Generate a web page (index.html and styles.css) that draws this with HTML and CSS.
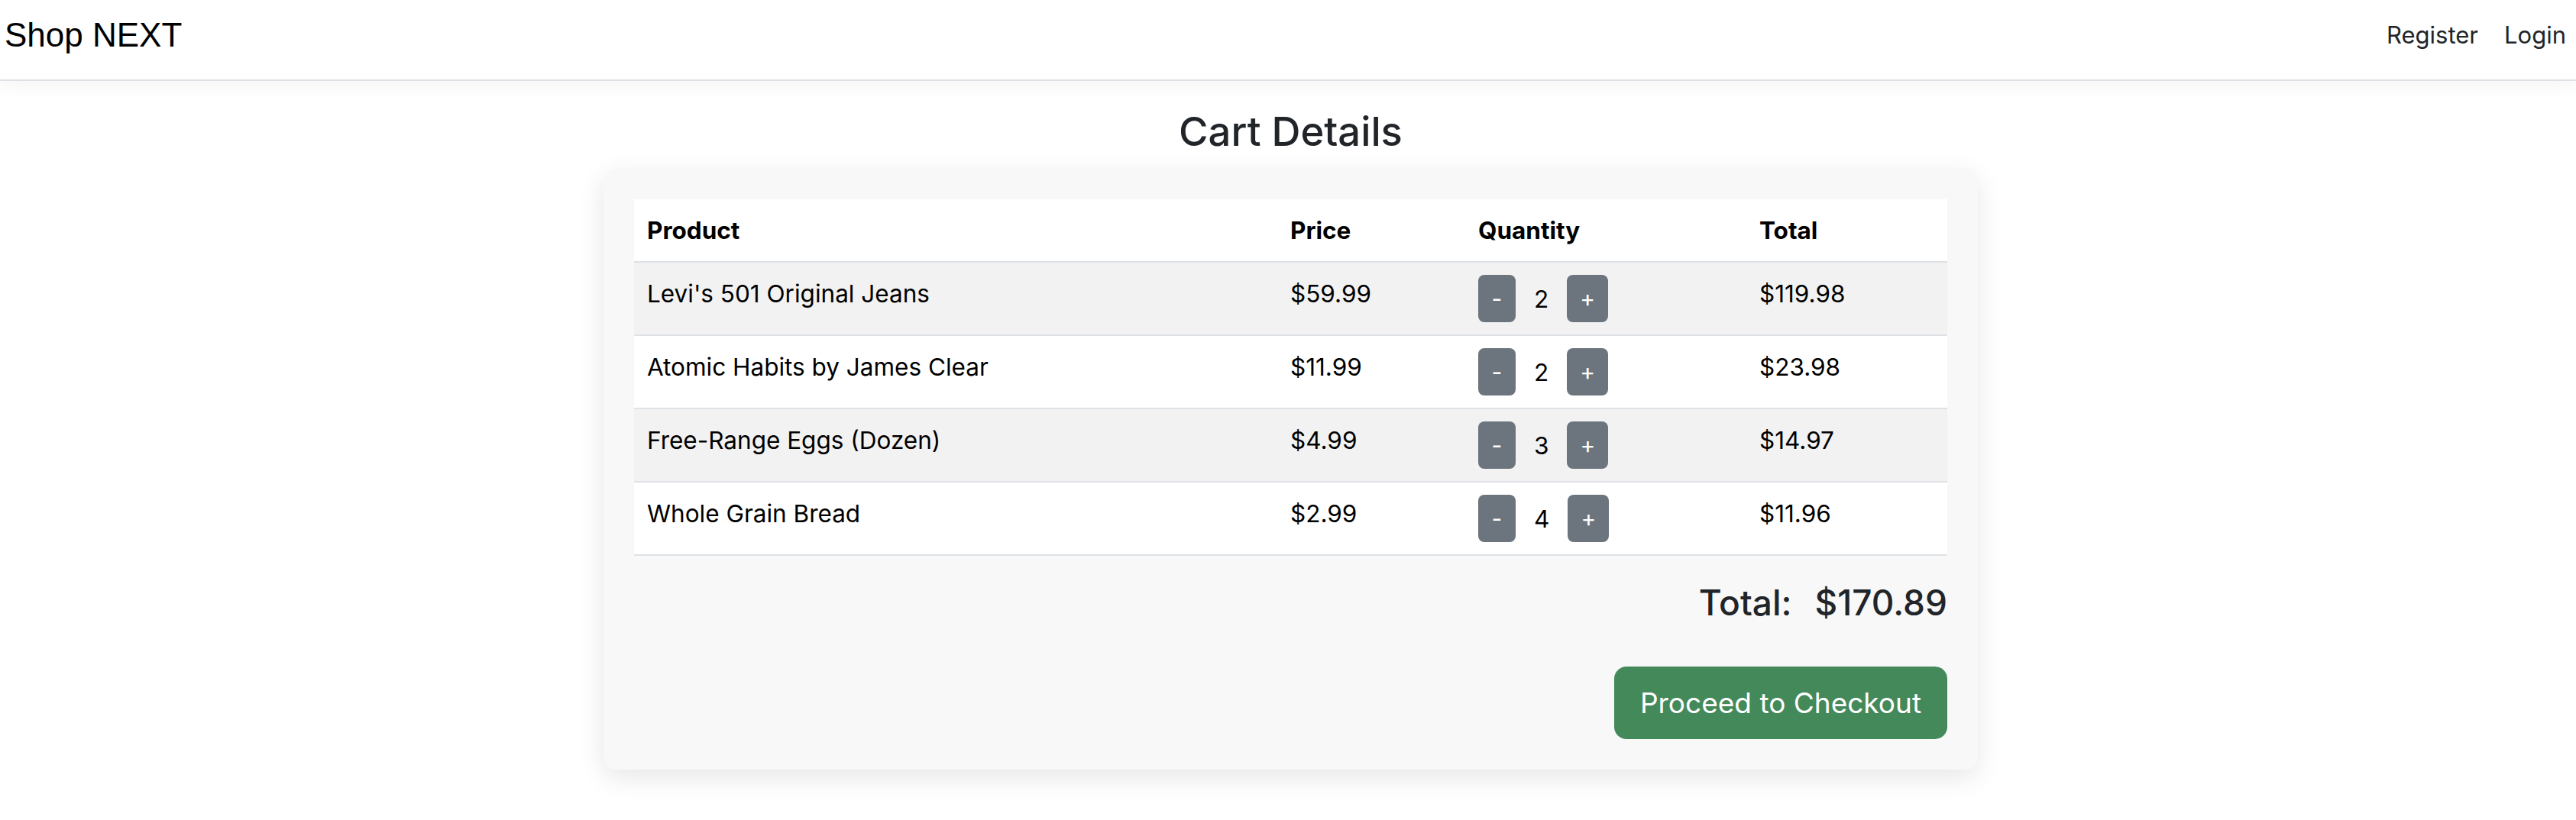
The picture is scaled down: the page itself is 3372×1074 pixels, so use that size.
FILE: index.html
```html
<!DOCTYPE html>
<html lang="en">
<head>
<meta charset="utf-8">
<title>Shop NEXT - Cart</title>
<link rel="stylesheet" href="styles.css">
</head>
<body>
<header class="navbar">
  <a class="brand" href="#">Shop NEXT</a>
  <nav class="nav-links">
    <a href="#">Register</a>
    <a href="#">Login</a>
  </nav>
</header>
<main class="page">
  <h2 class="page-title">Cart Details</h2>
  <section class="cart-card">
    <table class="cart-table">
      <colgroup>
        <col class="col-product">
        <col class="col-price">
        <col class="col-qty">
        <col class="col-total">
      </colgroup>
      <thead>
        <tr><th>Product</th><th>Price</th><th>Quantity</th><th>Total</th></tr>
      </thead>
      <tbody>
        <tr>
          <td>Levi's 501 Original Jeans</td>
          <td>$59.99</td>
          <td><div class="qty"><button class="qty-btn minus">-</button><span class="qty-num">2</span><button class="qty-btn plus">+</button></div></td>
          <td>$119.98</td>
        </tr>
        <tr>
          <td>Atomic Habits by James Clear</td>
          <td>$11.99</td>
          <td><div class="qty"><button class="qty-btn minus">-</button><span class="qty-num">2</span><button class="qty-btn plus">+</button></div></td>
          <td>$23.98</td>
        </tr>
        <tr>
          <td>Free-Range Eggs (Dozen)</td>
          <td>$4.99</td>
          <td><div class="qty"><button class="qty-btn minus">-</button><span class="qty-num">3</span><button class="qty-btn plus">+</button></div></td>
          <td>$14.97</td>
        </tr>
        <tr>
          <td>Whole Grain Bread</td>
          <td>$2.99</td>
          <td><div class="qty"><button class="qty-btn minus">-</button><span class="qty-num">4</span><button class="qty-btn plus">+</button></div></td>
          <td>$11.96</td>
        </tr>
      </tbody>
    </table>
    <div class="cart-total"><span>Total:</span><span>$170.89</span></div>
    <div class="cart-actions"><button class="btn-checkout">Proceed to Checkout</button></div>
  </section>
</main>
</body>
</html>
```

FILE: styles.css
```css
html, body {
  margin: 0;
  padding: 0;
  background: #ffffff;
}

body {
  font-family: Inter, "Noto Sans", sans-serif;
  color: #212529;
}

.navbar {
  display: flex;
  justify-content: space-between;
  align-items: flex-start;
  height: 104px;
  padding: 0 13px 0 6px;
  border-bottom: 2px solid #dee2e6;
  box-shadow: 0 4px 26px rgba(0, 0, 0, 0.05);
  background: #ffffff;
}

.brand {
  font-family: "Liberation Sans", Arial, sans-serif;
  font-size: 44px;
  line-height: 44px;
  margin-top: 24px;
  color: #000000;
  text-decoration: none;
}

.nav-links {
  display: flex;
  gap: 34px;
  margin-top: 30px;
}

.nav-links a {
  font-size: 31px;
  line-height: 31px;
  color: #212529;
  text-decoration: none;
}

.page {
  display: flex;
  flex-direction: column;
  align-items: center;
  padding-left: 7px;
}

.page-title {
  margin: 35px 0 17px;
  font-size: 52.5px;
  line-height: 63px;
  font-weight: 500;
  color: #212529;
}

.cart-card {
  width: 1799px;
  box-sizing: border-box;
  padding: 40px;
  margin-bottom: 40px;
  background: #f8f8f8;
  border-radius: 16px;
  box-shadow: 0 10px 34px rgba(0, 0, 0, 0.1);
}

.cart-table {
  width: 100%;
  border-collapse: collapse;
  table-layout: fixed;
  background: #ffffff;
  font-size: 31.5px;
  line-height: 49px;
  color: #000000;
}

.col-product { width: 842px; }
.col-price { width: 246px; }
.col-qty { width: 368px; }
.col-total { width: 263px; }

.cart-table th,
.cart-table td {
  padding: 16px 17px;
  text-align: left;
  vertical-align: top;
  border-bottom: 2px solid #dee2e6;
}

.cart-table th {
  font-weight: 700;
}

.cart-table tbody tr:nth-child(odd) td {
  background: #f2f2f2;
}

.qty {
  display: flex;
  align-items: center;
  height: 62px;
}

.qty-btn {
  height: 62px;
  padding: 0;
  border: 0;
  border-radius: 8px;
  background: #6c757d;
  color: #ffffff;
  font-family: Inter, "Noto Sans", sans-serif;
  font-size: 30px;
  line-height: 1;
}

.qty-btn.minus { width: 49px; }
.qty-btn.plus { width: 54px; }

.qty-num {
  margin: 0 24px;
  min-width: 19px;
  text-align: center;
}

.cart-total {
  display: flex;
  justify-content: flex-end;
  gap: 30px;
  margin-top: 33px;
  font-size: 46px;
  line-height: 56px;
  font-weight: 500;
  color: #212529;
}

.cart-actions {
  display: flex;
  justify-content: flex-end;
  margin-top: 56px;
}

.btn-checkout {
  height: 95px;
  padding: 0 34px;
  border: 0;
  border-radius: 16px;
  background: #43895a;
  color: #ffffff;
  font-family: Inter, "Noto Sans", sans-serif;
  font-size: 37px;
}
```
